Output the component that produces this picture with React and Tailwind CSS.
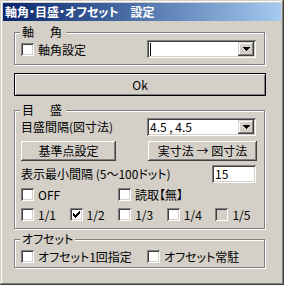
import React from "react";

const SUNKEN =
  "shadow-[inset_1px_1px_#808080,inset_-1px_-1px_#ffffff,inset_2px_2px_#404040,inset_-2px_-2px_#d4d0c8]";

function Check({ checked, disabled, label, className }) {
  return (
    <div className={`flex items-center h-[13px] ${className || ""}`}>
      <span
        className={`relative block w-[13px] h-[13px] shrink-0 ${
          disabled ? "bg-[#d4d0c8]" : "bg-white"
        } shadow-[inset_1px_1px_#808080,inset_-1px_-1px_#ffffff,inset_2px_2px_#404040,inset_-2px_-2px_#d4d0c8]`}
      >
        {checked && (
          <svg
            className="absolute left-[3px] top-[3px]"
            width="7"
            height="7"
            viewBox="0 0 7 7"
            shapeRendering="crispEdges"
          >
            <rect x="6" y="0" width="1" height="3" fill="#000" />
            <rect x="5" y="1" width="1" height="3" fill="#000" />
            <rect x="4" y="2" width="1" height="3" fill="#000" />
            <rect x="3" y="3" width="1" height="3" fill="#000" />
            <rect x="2" y="4" width="1" height="3" fill="#000" />
            <rect x="1" y="3" width="1" height="3" fill="#000" />
            <rect x="0" y="2" width="1" height="3" fill="#000" />
          </svg>
        )}
      </span>
      <span className="ml-[4px] text-[12px] leading-[13px] whitespace-nowrap [font-feature-settings:'palt']">
        {label}
      </span>
    </div>
  );
}

function Arrow() {
  return (
    <svg width="7" height="4" viewBox="0 0 7 4" shapeRendering="crispEdges">
      <rect x="0" y="0" width="7" height="1" fill="#000" />
      <rect x="1" y="1" width="5" height="1" fill="#000" />
      <rect x="2" y="2" width="3" height="1" fill="#000" />
      <rect x="3" y="3" width="1" height="1" fill="#000" />
    </svg>
  );
}

function Combo({ value, cursor }) {
  return (
    <div
      className={`flex w-[109px] h-[18px] bg-white p-[2px] ${SUNKEN}`}
    >
      <div className="flex-1 flex items-center pl-[1px] text-[12px] leading-[14px] whitespace-nowrap">
        {cursor ? <span className="block w-[1px] h-[13px] bg-black" /> : value}
      </div>
      <div className="w-[16px] h-[14px] bg-[#d4d0c8] flex items-center justify-center shadow-[inset_-1px_-1px_#404040,inset_1px_1px_#d4d0c8,inset_-2px_-2px_#808080,inset_2px_2px_#ffffff]">
        <Arrow />
      </div>
    </div>
  );
}

function Btn({ children, className }) {
  return (
    <div
      className={`flex items-center justify-center bg-[#d4d0c8] text-[12px] leading-[14px] whitespace-nowrap shadow-[inset_-1px_-1px_#404040,inset_1px_1px_#ffffff,inset_-2px_-2px_#808080,inset_2px_2px_#d4d0c8] ${className || ""}`}
    >
      {children}
    </div>
  );
}

function Group({ label, className, labelClass, children }) {
  return (
    <div
      className={`relative w-[251px] border border-[#808080] shadow-[inset_1px_1px_#ffffff,1px_1px_#ffffff] pl-[6px] ${className || ""}`}
    >
      <div
        className={`absolute top-[-8px] left-[5px] bg-[#d4d0c8] px-[2px] text-[12px] leading-[14px] whitespace-nowrap ${labelClass || ""}`}
      >
        {label}
      </div>
      {children}
    </div>
  );
}

export default function App() {
  return (
    <div className="w-[284px] h-[285px] bg-[#d4d0c8] p-[3px] text-black font-['Noto_Sans_CJK_JP',sans-serif] shadow-[inset_-1px_-1px_#404040,inset_1px_1px_#d4d0c8,inset_-2px_-2px_#808080,inset_2px_2px_#ffffff] overflow-hidden">
      <div className="h-[18px] flex items-center pl-[2px] bg-linear-to-r from-[#0a246a] to-[#a6caf0] text-white font-bold text-[12px] leading-[14px] whitespace-nowrap [font-feature-settings:'palt']">
        軸角・目盛・オフセット　設定
      </div>

      <div className="px-[11px]">
        <Group label="軸　角" labelClass="tracking-[2px]" className="mt-[11px] h-[33px] pt-[7px]">
          <div className="flex items-center h-[18px]">
            <Check label="軸角設定" className="w-[126px]" />
            <Combo cursor />
          </div>
        </Group>

        <Btn className="mt-[8px] w-[252px] h-[23px] border border-black shadow-[inset_1px_1px_#ffffff,inset_-1px_-1px_#808080]">
          Ok
        </Btn>

        <Group label="目　盛" labelClass="tracking-[2px]" className="mt-[14px] h-[119px] pt-[7px]">
          <div className="flex items-center h-[18px]">
            <div className="w-[126px] text-[12px] leading-[14px] whitespace-nowrap">
              目盛間隔(図寸法)
            </div>
            <Combo value="4.5 , 4.5" />
          </div>
          <div className="flex mt-[5px] h-[20px]">
            <Btn className="w-[95px] h-[20px]">基準点設定</Btn>
            <Btn className="ml-[32px] w-[109px] h-[20px]">実寸法 → 図寸法</Btn>
          </div>
          <div className="flex items-center mt-[4px] h-[18px]">
            <div className="w-[191px] text-[12px] leading-[14px] whitespace-nowrap [font-feature-settings:'palt']">
              表示最小間隔 (5〜100ドット)
            </div>
            <div className={`w-[44px] h-[18px] bg-white pl-[3px] flex items-center text-[12px] leading-[14px] ${SUNKEN}`}>
              15
            </div>
          </div>
          <div className="flex mt-[5px]">
            <Check label="OFF" className="w-[97px]" />
            <Check label="読取【無】" />
          </div>
          <div className="flex mt-[7px]">
            <Check label="1/1" className="w-[49px]" />
            <Check label="1/2" checked className="w-[49px]" />
            <Check label="1/3" className="w-[49px]" />
            <Check label="1/4" className="w-[49px]" />
            <Check label="1/5" disabled className="w-[49px]" />
          </div>
        </Group>

        <Group label="オフセット" labelClass="left-[4px] [font-feature-settings:'palt']" className="mt-[10px] h-[29px] pt-[10px]">
          <div className="flex">
            <Check label="オフセット1回指定" className="w-[126px]" />
            <Check label="オフセット常駐" />
          </div>
        </Group>
      </div>
    </div>
  );
}
